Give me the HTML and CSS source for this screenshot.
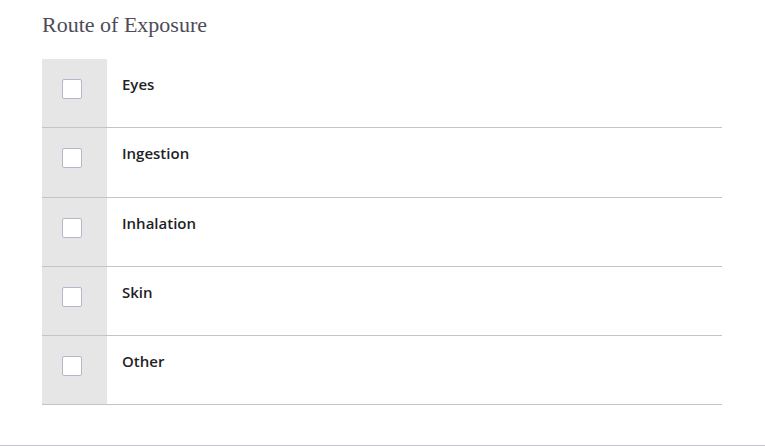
FILE: index.html
```html
<!DOCTYPE html>
<html lang="en">
<head>
    <meta charset="UTF-8">
    <meta name="viewport" content="width=device-width, initial-scale=1.0">
    <title>Route of Exposure</title>
    <link rel="stylesheet" href="styles.css">
</head>
<body>
    <main class="section">
        <h2 class="section-title">Route of Exposure</h2>
        <ul class="check-list">
            <li class="check-row">
                <span class="check-cell"><input type="checkbox" id="eyes" name="route" value="eyes"></span>
                <label class="check-label" for="eyes">Eyes</label>
            </li>
            <li class="check-row">
                <span class="check-cell"><input type="checkbox" id="ingestion" name="route" value="ingestion"></span>
                <label class="check-label" for="ingestion">Ingestion</label>
            </li>
            <li class="check-row">
                <span class="check-cell"><input type="checkbox" id="inhalation" name="route" value="inhalation"></span>
                <label class="check-label" for="inhalation">Inhalation</label>
            </li>
            <li class="check-row">
                <span class="check-cell"><input type="checkbox" id="skin" name="route" value="skin"></span>
                <label class="check-label" for="skin">Skin</label>
            </li>
            <li class="check-row">
                <span class="check-cell"><input type="checkbox" id="other" name="route" value="other"></span>
                <label class="check-label" for="other">Other</label>
            </li>
        </ul>
    </main>
    <footer class="page-end"></footer>
</body>
</html>
```

FILE: styles.css
```css
body {
    margin: 0;
    padding: 0;
    background-color: #fff;
    font-family: "Open Sans", Arial, sans-serif;
}
.section {
    padding: 0 43px 0 42px;
    height: 445px;
    box-sizing: border-box;
}
.section-title {
    margin: 0;
    padding-top: 11px;
    height: 59px;
    box-sizing: border-box;
    font-family: "Liberation Serif", "DejaVu Serif", serif;
    font-weight: normal;
    font-size: 22px;
    line-height: 28px;
    color: #4d4b58;
}
.check-list {
    list-style: none;
    margin: 0;
    padding: 0;
}
.check-row {
    display: flex;
    height: 69.25px;
    box-sizing: border-box;
    border-bottom: 1px solid #c6c2cc;
}
.check-cell {
    width: 65px;
    flex-shrink: 0;
    background-color: #e6e6e6;
    padding: 20px 0 0 20px;
    box-sizing: border-box;
}
.check-cell input[type="checkbox"] {
    appearance: none;
    -webkit-appearance: none;
    display: block;
    width: 20px;
    height: 20px;
    margin: 0;
    background-color: #fff;
    border: 1px solid #b9b5c9;
    border-radius: 2px;
    cursor: pointer;
}
.check-cell input[type="checkbox"]:checked {
    background-color: #4d4b58;
}
.check-label {
    padding: 14px 0 0 15px;
    font-size: 15px;
    font-weight: 600;
    line-height: 22px;
    color: #1f1f28;
    cursor: pointer;
}
.page-end {
    border-top: 1px solid #c6c2cc;
}
```
